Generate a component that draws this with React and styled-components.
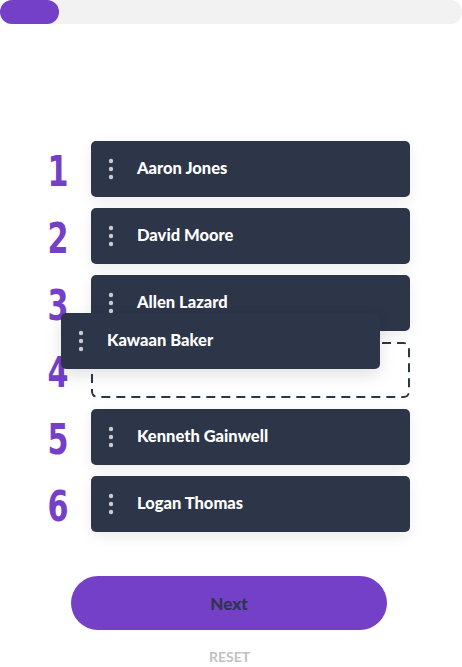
import React from 'react';
import styled, { createGlobalStyle } from 'styled-components';

const Global = createGlobalStyle`
  body { margin: 0; background: #fff; font-family: Lato, "Noto Sans", sans-serif; }
`;

const players = ['Aaron Jones', 'David Moore', 'Allen Lazard', null, 'Kenneth Gainwell', 'Logan Thomas'];

const Page = styled.div`
  width: 462px;
  height: 667px;
  display: flex;
  flex-direction: column;
  align-items: center;
`;

const Track = styled.div`
  align-self: stretch;
  height: 24px;
  border-radius: 12px;
  background: #f2f2f2;
  display: flex;
`;

const Fill = styled.div`
  width: 59px;
  border-radius: 12px;
  background: #7440c8;
`;

const List = styled.div`
  margin-top: 117px;
  align-self: stretch;
  display: flex;
  flex-direction: column;
  gap: 11px;
  padding-left: 40px;
`;

const Row = styled.div`
  display: flex;
  align-items: center;
  gap: 15px;
  position: relative;
`;

const Num = styled.div`
  width: 36px;
  text-align: center;
  font-family: "DejaVu Sans Condensed", "DejaVu Sans", sans-serif;
  font-stretch: condensed;
  font-weight: 700;
  font-size: 43px;
  line-height: 56px;
  color: #7440c8;
  transform: scaleX(0.78) translateY(2px);
`;

const Card = styled.div`
  width: 319px;
  height: 56px;
  box-sizing: border-box;
  border-radius: 5px;
  background: #2d3548;
  display: flex;
  align-items: center;
  padding-left: 17px;
  gap: 23px;
  color: #fff;
  font-weight: 900;
  font-size: 16.5px;
  box-shadow: 0 4px 14px rgba(0, 0, 0, 0.08);
`;

const Name = styled.span`
  padding-bottom: 3px;
`;

const Slot = styled.div`
  width: 319px;
  height: 56px;
  border-radius: 6px;
  background-image: url("data:image/svg+xml,%3csvg width='100%25' height='100%25' xmlns='http://www.w3.org/2000/svg'%3e%3crect x='1' y='1' width='calc(100%25 - 2px)' height='calc(100%25 - 2px)' fill='none' rx='5' stroke='%232d3548' stroke-width='2' stroke-dasharray='9 6'/%3e%3c/svg%3e");
`;

const Dragged = styled(Card)`
  position: absolute;
  left: 21px;
  top: -29px;
  box-shadow: 0 6px 16px rgba(0, 0, 0, 0.12);
`;

const Next = styled.button`
  margin-top: 44px;
  margin-right: 4px;
  width: 316px;
  height: 54px;
  border: none;
  border-radius: 27px;
  background: #7440c8;
  color: #2d3548;
  font-family: Lato, sans-serif;
  font-weight: 900;
  font-size: 17px;
`;

const Reset = styled.div`
  margin-top: 18px;
  margin-right: 3px;
  color: #c2c2c2;
  font-weight: 700;
  font-size: 14px;
`;

const Dots = () => (
  <svg width="6" height="22" viewBox="0 0 6 22">
    <circle cx="3" cy="3" r="2.2" fill="#c9cbd1" />
    <circle cx="3" cy="11" r="2.2" fill="#c9cbd1" />
    <circle cx="3" cy="19" r="2.2" fill="#c9cbd1" />
  </svg>
);

export default function App() {
  return (
    <Page>
      <Global />
      <Track><Fill /></Track>
      <List>
        {players.map((name, i) => (
          <Row key={i}>
            <Num>{i + 1}</Num>
            {name ? (
              <Card><Dots /><Name>{name}</Name></Card>
            ) : (
              <Slot />
            )}
            {name === null && (
              <Dragged><Dots /><Name>Kawaan Baker</Name></Dragged>
            )}
          </Row>
        ))}
      </List>
      <Next>Next</Next>
      <Reset>RESET</Reset>
    </Page>
  );
}
